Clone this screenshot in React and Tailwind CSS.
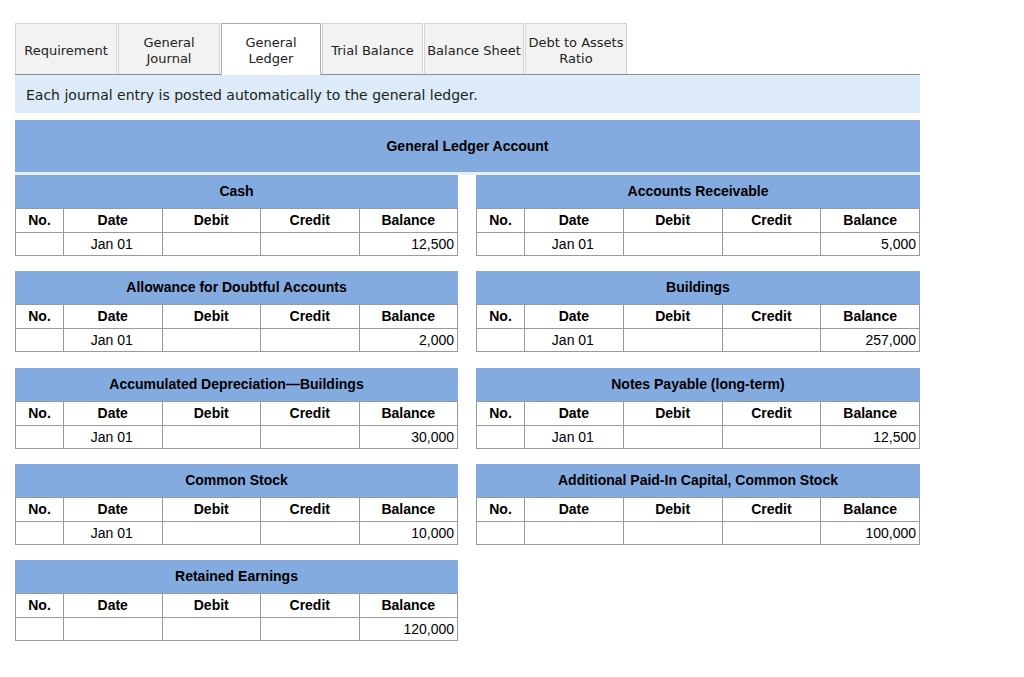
import React from "react";

const tabs = [
  { lines: ["Requirement"], w: "w-[102px]" },
  { lines: ["General", "Journal"], w: "w-[102px]" },
  { lines: ["General", "Ledger"], w: "w-[100px]" },
  { lines: ["Trial Balance"], w: "w-[101px]" },
  { lines: ["Balance Sheet"], w: "w-[100px]" },
  { lines: ["Debt to Assets", "Ratio"], w: "w-[102px]" },
];

const accounts = [
  { title: "Cash", date: "Jan 01", balance: "12,500" },
  { title: "Accounts Receivable", date: "Jan 01", balance: "5,000" },
  { title: "Allowance for Doubtful Accounts", date: "Jan 01", balance: "2,000" },
  { title: "Buildings", date: "Jan 01", balance: "257,000" },
  { title: "Accumulated Depreciation\u2014Buildings", date: "Jan 01", balance: "30,000" },
  { title: "Notes Payable (long-term)", date: "Jan 01", balance: "12,500" },
  { title: "Common Stock", date: "Jan 01", balance: "10,000" },
  { title: "Additional Paid-In Capital, Common Stock", date: "", balance: "100,000" },
  { title: "Retained Earnings", date: "", balance: "120,000" },
];

function Account({ title, date, balance }) {
  const cell = "border border-[#9a9a9a] p-0";
  return (
    <div className="flex flex-col">
      <div className="h-[33px] bg-[#83abdf] flex items-center justify-center font-bold text-[14px] text-black">
        {title}
      </div>
      <table className="w-full border-collapse table-fixed text-[14px] text-black">
        <colgroup>
          <col className="w-[48px]" />
          <col />
          <col />
          <col />
          <col />
        </colgroup>
        <tbody>
          <tr className="h-[24px] bg-white font-bold">
            <td className={`${cell} text-center`}>No.</td>
            <td className={`${cell} text-center`}>Date</td>
            <td className={`${cell} text-center`}>Debit</td>
            <td className={`${cell} text-center`}>Credit</td>
            <td className={`${cell} text-center`}>Balance</td>
          </tr>
          <tr className="h-[23px] bg-white">
            <td className={cell}></td>
            <td className={`${cell} text-center pr-[2px] pt-[1px]`}>{date}</td>
            <td className={cell}></td>
            <td className={cell}></td>
            <td className={`${cell} text-right pr-[3px] pt-[1px]`}>{balance}</td>
          </tr>
        </tbody>
      </table>
    </div>
  );
}

export default function App() {
  return (
    <div className="min-h-screen bg-white pl-[15px] pt-[23px] font-['Liberation_Sans',Arial,sans-serif]">
      <div className="w-[905px]">
        <div className="flex items-end gap-[1px] border-b border-[#8c8c8c] font-['DejaVu_Sans',Verdana,sans-serif] text-[13px] text-[#222]">
          {tabs.map((t, i) => {
            const active = i === 2;
            return (
              <div
                key={i}
                className={`${t.w} ${
                  active
                    ? "h-[52px] -mb-px bg-white border border-b-0 border-[#aaaaaa]"
                    : "h-[51px] bg-[#f2f2f2] border border-b-0 border-[#d4d4d4]"
                } flex flex-col items-center justify-center pt-[3px] leading-[16px] whitespace-nowrap`}
              >
                {t.lines.map((line, j) => (
                  <span key={j}>{line}</span>
                ))}
              </div>
            );
          })}
        </div>
        <div className="h-[38px] bg-[#ddebf8] flex items-center pl-[11px] pt-[2px] font-['DejaVu_Sans',Verdana,sans-serif] text-[14px] text-[#222]">
          Each journal entry is posted automatically to the general ledger.
        </div>
        <div className="mt-[7px] h-[52px] bg-[#83abdf] flex items-center justify-center pt-[1px] font-bold text-[14px] text-black">
          General Ledger Account
        </div>
        <div className="h-[3px] bg-[#e8eef8]"></div>
        <div className="grid grid-cols-[443px_444px] gap-x-[18px] gap-y-[15.33px]">
          {accounts.map((a) => (
            <Account key={a.title} {...a} />
          ))}
        </div>
      </div>
    </div>
  );
}
